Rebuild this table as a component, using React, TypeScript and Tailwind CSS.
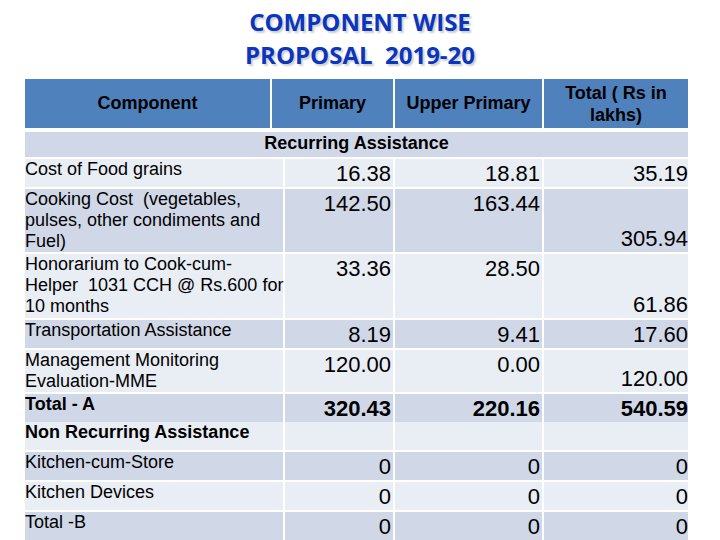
import React from "react";

type Row = {
  label: React.ReactNode;
  primary: string;
  upper: string;
  total: string;
  h: string;
  dark: boolean;
  bold?: boolean;
};

const rows: Row[] = [
  { label: "Cost of Food grains", primary: "16.38", upper: "18.81", total: "35.19", h: "h-[28px]", dark: false },
  {
    label: (
      <>
        Cooking Cost&nbsp; (vegetables,
        <br />
        pulses, other condiments and
        <br />
        Fuel)
      </>
    ),
    primary: "142.50",
    upper: "163.44",
    total: "305.94",
    h: "h-[63px]",
    dark: true,
  },
  {
    label: (
      <>
        Honorarium to Cook-cum-
        <br />
        Helper&nbsp; 1031 CCH @ Rs.600 for
        <br />
        10 months
      </>
    ),
    primary: "33.36",
    upper: "28.50",
    total: "61.86",
    h: "h-[64px]",
    dark: false,
  },
  { label: "Transportation Assistance", primary: "8.19", upper: "9.41", total: "17.60", h: "h-[28px]", dark: true },
  {
    label: (
      <>
        Management Monitoring
        <br />
        Evaluation-MME
      </>
    ),
    primary: "120.00",
    upper: "0.00",
    total: "120.00",
    h: "h-[42px]",
    dark: false,
  },
  { label: "Total - A", primary: "320.43", upper: "220.16", total: "540.59", h: "h-[26px]", dark: true, bold: true },
  { label: "Non Recurring Assistance", primary: "", upper: "", total: "", h: "h-[28px]", dark: false, bold: true },
  { label: "Kitchen-cum-Store", primary: "0", upper: "0", total: "0", h: "h-[28px]", dark: true },
  { label: "Kitchen Devices", primary: "0", upper: "0", total: "0", h: "h-[28px]", dark: false },
  { label: "Total -B", primary: "0", upper: "0", total: "0", h: "h-[28px]", dark: true },
];

function BodyRow({ row }: { row: Row }) {
  const bg = row.dark ? "bg-[#d0d8e8]" : "bg-[#e9edf4]";
  const weight = row.bold ? "font-bold" : "font-normal";
  return (
    <div className={`grid grid-cols-[258px_108px_147px_144px] gap-[2px] ${row.h}`}>
      <div className={`${bg} ${weight} text-[18px] leading-[21px] whitespace-nowrap`}>{row.label}</div>
      <div className={`${bg} ${weight} text-[22px] leading-[26px] text-right pr-[2px] pt-[2px]`}>{row.primary}</div>
      <div className={`${bg} ${weight} text-[22px] leading-[26px] text-right pr-[2px] pt-[2px]`}>{row.upper}</div>
      <div className={`${bg} ${weight} text-[22px] leading-[26px] flex items-end justify-end`}>{row.total}</div>
    </div>
  );
}

export default function App() {
  return (
    <div className="w-[720px] h-[540px] bg-white overflow-hidden font-['Liberation_Sans',Arial,sans-serif] text-black">
      {/* Title */}
      <div className="pt-[5px] mb-[8px] text-center font-['Open_Sans',sans-serif] font-bold text-[24px] leading-[33px] text-[#0a35c0] [text-shadow:2px_2px_2px_rgba(0,0,0,0.2)]">
        <p>COMPONENT WISE</p>
        <p className="whitespace-pre">PROPOSAL  2019-20</p>
      </div>

      <div className="ml-[25px] w-[663px]">
        {/* Header */}
        <div className="grid grid-cols-[245px_121px_147px_144px] gap-[2px] h-[49px] text-[18px] font-bold">
          <div className="bg-[#4f81bd] flex items-center justify-center">Component</div>
          <div className="bg-[#4f81bd] flex items-center justify-center">Primary</div>
          <div className="bg-[#4f81bd] flex items-center justify-center">Upper Primary</div>
          <div className="bg-[#4f81bd] flex items-center justify-center text-center leading-[22px]">
            Total ( Rs in
            <br />
            lakhs)
          </div>
        </div>

        <div className="mt-[4px] h-[25px] bg-[#d0d8e8] flex items-center justify-center pb-[3px] text-[18px] font-bold">
          Recurring Assistance
        </div>

        <div className="mt-[2px] flex flex-col gap-[2px]">
          {rows.map((r, i) => (
            <BodyRow key={i} row={r} />
          ))}
        </div>
      </div>
    </div>
  );
}
